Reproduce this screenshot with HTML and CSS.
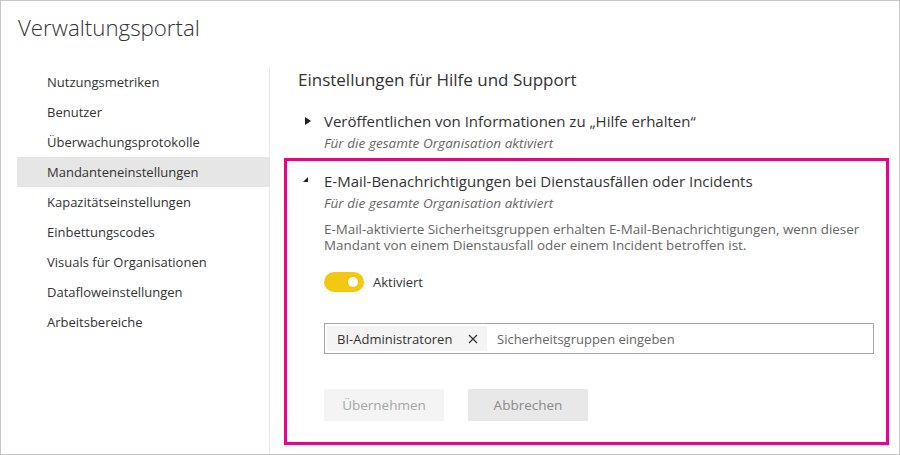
FILE: index.html
```html
<!DOCTYPE html>
<html lang="de">
<head>
<meta charset="utf-8">
<title>Verwaltungsportal</title>
<link rel="stylesheet" href="styles.css">
</head>
<body>
<div class="frame">
  <header class="title">Verwaltungsportal</header>
  <div class="body">
    <nav class="nav">
      <div class="nav-item">Nutzungsmetriken</div>
      <div class="nav-item">Benutzer</div>
      <div class="nav-item">Überwachungsprotokolle</div>
      <div class="nav-item active">Mandanteneinstellungen</div>
      <div class="nav-item">Kapazitätseinstellungen</div>
      <div class="nav-item">Einbettungscodes</div>
      <div class="nav-item">Visuals für Organisationen</div>
      <div class="nav-item">Datafloweinstellungen</div>
      <div class="nav-item">Arbeitsbereiche</div>
    </nav>
    <main class="main">
      <h2 class="heading">Einstellungen für Hilfe und Support</h2>
      <section class="setting">
        <div class="setting-head">
          <span class="caret"><span class="tri-right"></span></span>
          <span class="setting-title">Veröffentlichen von Informationen zu „Hilfe erhalten“</span>
        </div>
        <div class="setting-sub">Für die gesamte Organisation aktiviert</div>
      </section>
      <section class="setting highlight">
        <div class="setting-head">
          <span class="caret"><span class="tri-down"></span></span>
          <span class="setting-title">E-Mail-Benachrichtigungen bei Dienstausfällen oder Incidents</span>
        </div>
        <div class="setting-sub">Für die gesamte Organisation aktiviert</div>
        <p class="desc"><span class="desc-line">E-Mail-aktivierte Sicherheitsgruppen erhalten E-Mail-Benachrichtigungen, wenn dieser</span><span class="desc-line">Mandant von einem Dienstausfall oder einem Incident betroffen ist.</span></p>
        <div class="toggle-row">
          <span class="toggle"><span class="knob"></span></span>
          <span class="toggle-label">Aktiviert</span>
        </div>
        <div class="picker">
          <span class="tag">BI-Administratoren
            <svg class="tag-x" width="10" height="10" viewBox="0 0 10 10"><path d="M1 1 L9 9 M9 1 L1 9" stroke="#333" stroke-width="1.2" fill="none"/></svg>
          </span>
          <span class="placeholder">Sicherheitsgruppen eingeben</span>
        </div>
        <div class="buttons">
          <button class="btn btn-apply">Übernehmen</button>
          <button class="btn btn-cancel">Abbrechen</button>
        </div>
      </section>
    </main>
  </div>
</div>
</body>
</html>
```
FILE: styles.css
```css
* { box-sizing: border-box; }
html, body { margin: 0; padding: 0; background: #fff; }
body { font-family: "Open Sans", "Noto Sans", sans-serif; color: #333; }

.frame {
  width: 900px;
  height: 455px;
  border: 1px solid #c6c6c6;
  display: flex;
  flex-direction: column;
  overflow: hidden;
}

.title {
  font-weight: 300;
  font-size: 22.3px;
  line-height: 30px;
  color: #333;
  padding: 12px 0 0 17px;
  height: 42px;
}

.body {
  display: flex;
  flex: 1;
  margin-top: 24px;
}

.nav {
  width: 253px;
  margin-left: 16px;
  border-right: 1px solid #e6e6e6;
}

.nav-item {
  height: 30px;
  line-height: 30px;
  font-size: 13px;
  padding-left: 30px;
  color: #333;
}
.nav-item.active { background: #e6e6e6; }

.main {
  flex: 1;
  padding: 0 10px 0 14px;
}

.heading {
  margin: 1px 0 0 14px;
  font-size: 17px;
  font-weight: 400;
  line-height: 24px;
  color: #333;
}

.setting {
  border: 3px solid transparent;
  padding: 10px 0 0 16px;
}
.setting:first-of-type { margin-top: 6px; }

.setting.highlight {
  border-color: #ec008c;
  margin-top: 3px;
  height: 287px;
}

.setting-head {
  display: flex;
  align-items: center;
  height: 20px;
}
.caret {
  width: 21px;
  height: 20px;
  position: relative;
  flex: none;
}
.tri-right {
  position: absolute;
  left: 2px;
  top: 6px;
  width: 0; height: 0;
  border-top: 4px solid transparent;
  border-bottom: 4px solid transparent;
  border-left: 6px solid #1f1f2e;
}
.tri-down {
  position: absolute;
  left: 0;
  top: 6px;
  width: 0; height: 0;
  border-left: 5px solid transparent;
  border-bottom: 5px solid #1f1f2e;
}
.setting-title {
  font-size: 15px;
  color: #333;
  white-space: nowrap;
}
.setting-sub {
  margin: 3px 0 0 21px;
  font-size: 13.5px;
  line-height: 18px;
  letter-spacing: 0.05px;
  font-style: italic;
  color: #666;
}

.desc {
  margin: 9px 0 0 21px;
  font-size: 13.4px;
  color: #666;
  white-space: nowrap;
  display: flex;
  flex-direction: column;
}
.desc-line {
  height: 16px;
  line-height: 16px;
}

.toggle-row {
  display: flex;
  align-items: center;
  margin: 19px 0 0 21px;
  height: 20px;
}
.toggle {
  width: 40px;
  height: 20px;
  border-radius: 10px;
  background: #f2c811;
  position: relative;
  flex: none;
}
.knob {
  position: absolute;
  right: 6px;
  top: 5px;
  width: 10px;
  height: 10px;
  border-radius: 50%;
  background: #fff;
}
.toggle-label {
  margin-left: 9px;
  font-size: 13px;
  color: #333;
}

.picker {
  margin: 31px 0 0 21px;
  width: 550px;
  height: 31px;
  border: 1px solid #a6a6a6;
  display: flex;
  align-items: center;
  padding: 2px;
}
.tag {
  height: 25px;
  width: 160px;
  background: #f4f4f4;
  display: flex;
  align-items: center;
  padding-left: 10px;
  font-size: 13px;
  color: #333;
  flex: none;
}
.tag-x { margin-left: 16px; }
.placeholder {
  margin-left: 10px;
  font-size: 13px;
  color: #666;
}

.buttons {
  display: flex;
  gap: 24px;
  margin: 35px 0 0 21px;
}
.btn {
  width: 120px;
  height: 32px;
  border: none;
  font-family: inherit;
  font-size: 13.5px;
  padding: 0;
}
.btn-apply { background: #f4f4f4; color: #a6a6a6; }
.btn-cancel { background: #e8e8e8; color: #8a8a8a; }
```
